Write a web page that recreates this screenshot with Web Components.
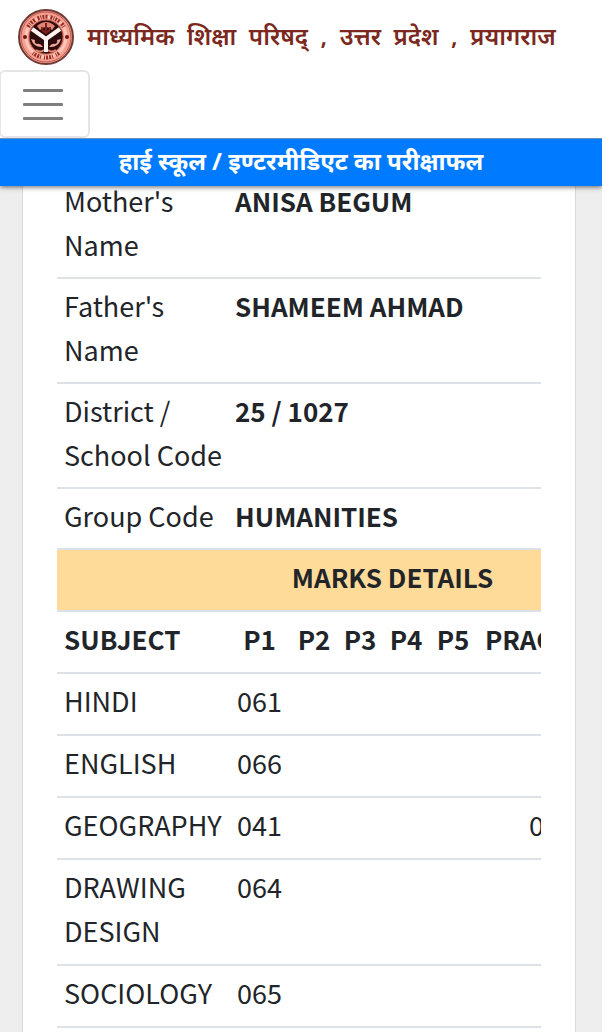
<!DOCTYPE html>
<html lang="en"><head><meta charset="utf-8"><title>UP Board Result</title>
<style>
html{background:#fff}
body{margin:0;border-right:4px solid #fff;color:#212529;font-family:"Noto Sans CJK SC","Noto Sans",sans-serif}
</style></head><body>
<board-page></board-page>
<script>
const define=(name,html)=>customElements.define(name,class extends HTMLElement{
  constructor(){super();this.attachShadow({mode:"open"}).innerHTML=html;}
});

define("board-seal",`<style>:host{display:block;flex:none;width:56px;height:56px}svg{display:block;width:100%;height:100%}</style>
<svg viewBox="0 0 56 56" aria-hidden="true">
<circle cx="28" cy="28" r="27" fill="#f2a091" stroke="#6e3a35" stroke-width="2"/>
<circle cx="28" cy="28" r="25" fill="none" stroke="#c4574a" stroke-width="1"/>
<circle cx="28" cy="28" r="20" fill="none" stroke="#fbc6b6" stroke-width="3"/>
<g fill="none" stroke="#9c2a22" stroke-width="4"><path d="M10 18A21 21 0 0 1 46 18" stroke-dasharray="2 1 1 1 2 1 2 3"/><path d="M15 44A21 21 0 0 0 41 44" stroke-dasharray="1 1 2 1 2 1 1 3"/></g>
<circle cx="7" cy="28" r="2" fill="#701515"/><circle cx="49" cy="28" r="2" fill="#701515"/>
<circle cx="28" cy="28" r="17" fill="#2c0c0c" stroke="#c4574a" stroke-width="1"/>
<path d="M19 17Q28 9 37 17L34 21Q28 15 22 21Z" fill="#e08474"/>
<path d="M28 14V25M24 18Q24 23 28 23Q32 23 32 18" fill="none" stroke="#7c201c" stroke-width="2"/>
<path d="M13 30Q16 39 25 38Q22 34 19 35Q16 34 17 31ZM43 30Q40 39 31 38Q34 34 37 35Q40 34 39 31Z" fill="#f2a798"/>
<path d="M18 41Q23 44 26 41M38 41Q33 44 30 41" fill="none" stroke="#e08474" stroke-width="2"/>
<path d="M14 20L28 30L42 20M28 29V43" fill="none" stroke="#fff4ef" stroke-width="4"/>
</svg>`);

define("board-header",`<style>
:host{display:block;position:sticky;top:0;z-index:2;background:#fff;box-shadow:0 1px 5px #0009}
.brand{display:flex;align-items:center;gap:13px;padding:9px 18px 5px}
.name{font-family:"Noto Sans",sans-serif;font-size:24px;line-height:36px;padding-bottom:2px;font-weight:600;color:#7b2820;white-space:pre;margin:0}
button{display:flex;flex-direction:column;align-items:center;justify-content:center;gap:11px;width:91px;height:68px;padding:0 4px 0 0;margin-left:-1px;background:#fff;border:2px solid #e5e5e5;border-radius:6px}
button span{width:40px;height:3px;border-radius:1px;background:#7f7f7f}
h1{margin:0;padding-bottom:3px;background:#007bff;border-top:1px solid #6c8fb5;color:#fff;text-align:center;font-family:"Noto Sans",sans-serif;font-size:24px;line-height:44px;font-weight:700}
</style>
<div class="brand"><board-seal></board-seal><p class="name" lang="hi">माध्यमिक  शिक्षा  परिषद्  ,  उत्तर  प्रदेश  ,  प्रयागराज</p></div>
<button type="button" aria-label="Menu"><span></span><span></span><span></span></button>
<h1 lang="hi">हाई स्कूल / इण्टरमीडिएट का परीक्षाफल</h1>`);

const subjects=[["HINDI","061"],["ENGLISH","066"],["GEOGRAPHY","041","0"],["DRAWING DESIGN","064"],["SOCIOLOGY","065"]];
const rows=subjects.map(([name,p1,prac=""])=>`<tr><th scope="row">${name}</th><td>${p1}</td><td></td><td></td><td></td><td></td><td class="value">${prac}</td></tr>`).join("");

define("result-table",`<style>
:host{display:block;overflow:hidden}
table{border-collapse:separate;border-spacing:0;table-layout:fixed;width:668px;font-size:27px;line-height:44px}
th,td{text-align:left;vertical-align:top;padding:5px 4px 10px 7px;border-top:2px solid #dee2e6;font-weight:400}
td{white-space:nowrap}
.info td,.head th,.title th{font-weight:700;font-size:26px}
.marks th,.marks td{padding-bottom:11px}
.marks tr>:nth-child(n+2){text-align:center;padding-left:0;padding-right:0}
.marks tr>:nth-child(7){text-align:left;padding-left:8px}
.marks tr>.value{padding-left:52px}
.marks .title th{background:#ffdb99;text-align:center}
.end td{padding:0}
</style>
<table><colgroup><col style="width:171px"><col style="width:63px"><col style="width:46px"><col style="width:46px"><col style="width:46px"><col style="width:48px"><col></colgroup>
<tbody class="info">
<tr><th scope="row">Mother's Name</th><td colspan="6">ANISA BEGUM</td></tr>
<tr><th scope="row">Father's Name</th><td colspan="6">SHAMEEM AHMAD</td></tr>
<tr><th scope="row">District / School Code</th><td colspan="6">25 / 1027</td></tr>
<tr><th scope="row">Group Code</th><td colspan="6">HUMANITIES</td></tr>
</tbody><tbody class="marks">
<tr class="title"><th colspan="7">MARKS DETAILS</th></tr>
<tr class="head"><th scope="col">SUBJECT</th><th scope="col">P1</th><th scope="col">P2</th><th scope="col">P3</th><th scope="col">P4</th><th scope="col">P5</th><th scope="col">PRAC</th></tr>
${rows}
</tbody><tfoot class="end"><tr><td colspan="7"></td></tr></tfoot></table>`);

define("board-page",`<style>
:host{display:flex;flex-direction:column;min-height:100vh;background:#eee}
main{flex:1;margin:-14px 26px 0 22px;padding:0 34px;background:#fff;border:1px solid #d9d9d9;border-width:0 1px}
</style><board-header></board-header><main><result-table></result-table></main>`);
</script></body></html>
